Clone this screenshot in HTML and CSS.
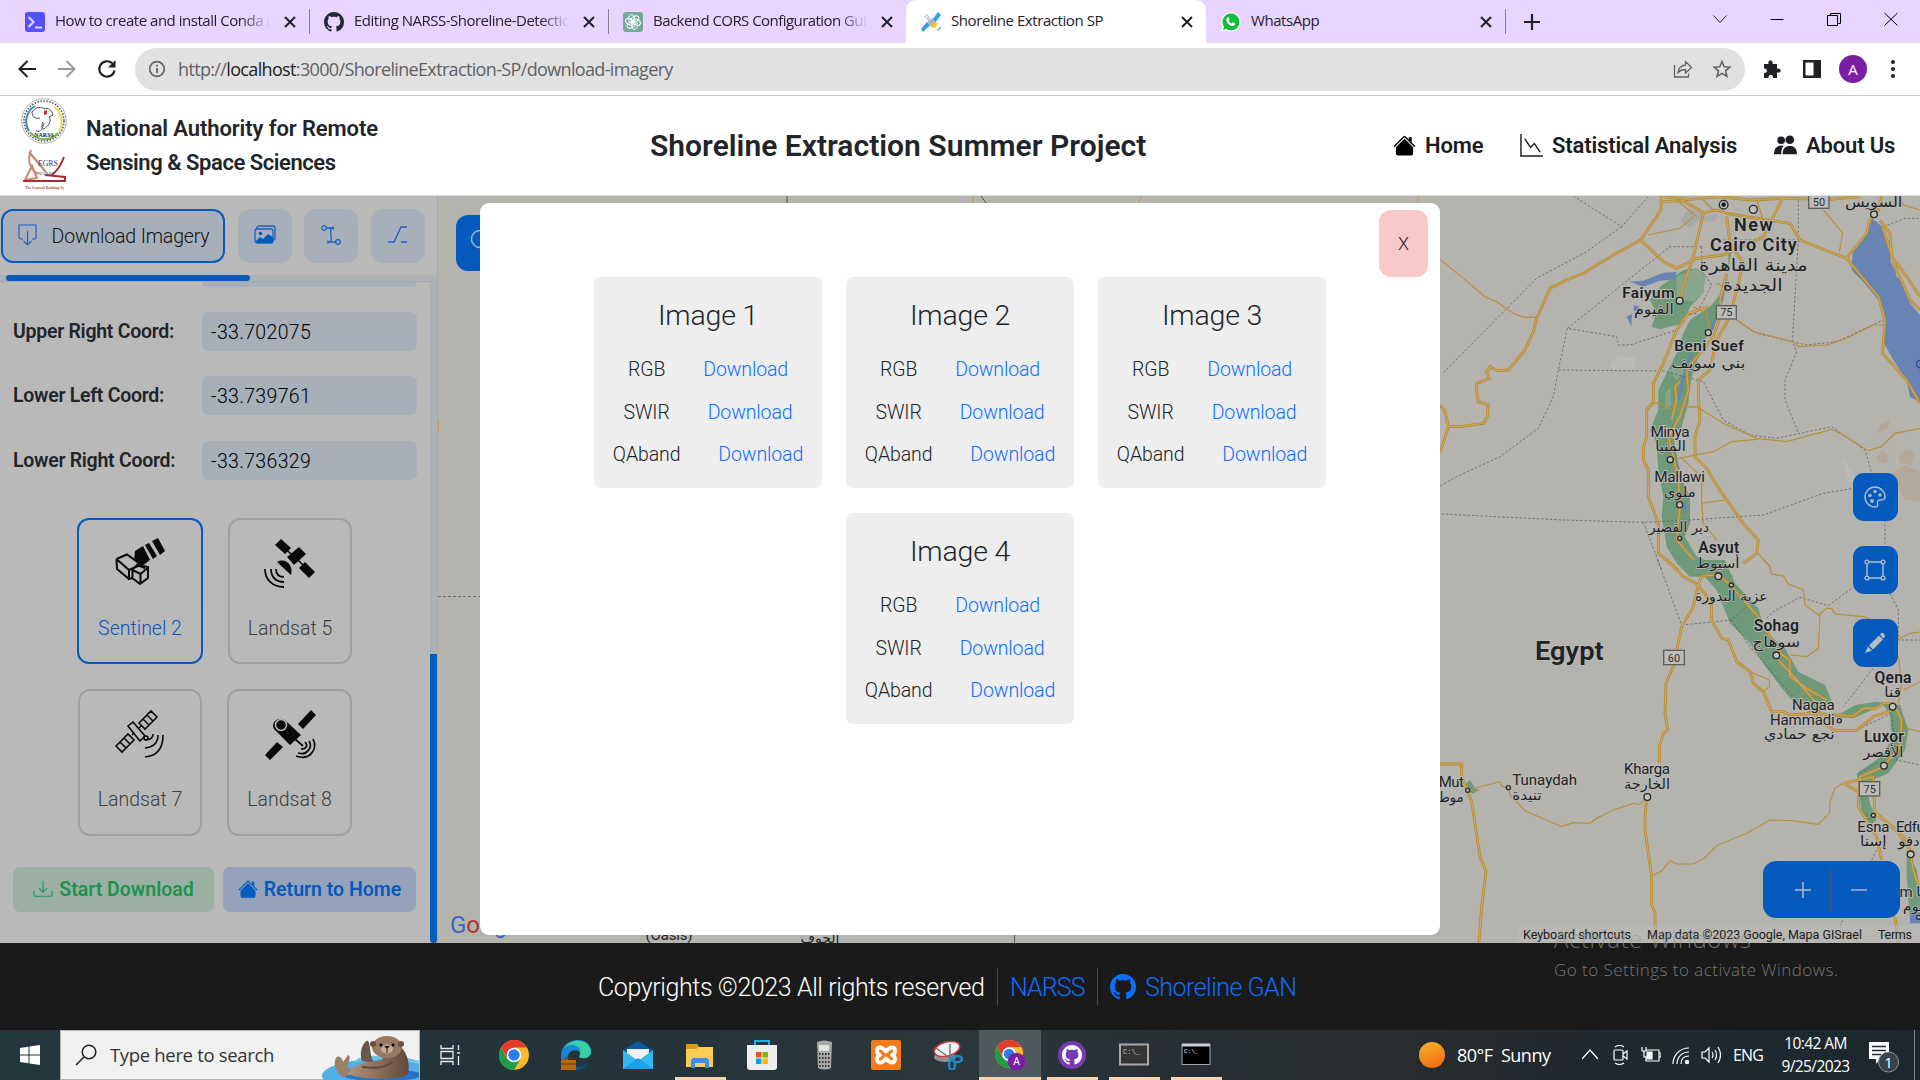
FILE: index.html
```html
<!DOCTYPE html>
<html lang="en">
<head>
<meta charset="utf-8">
<title>Shoreline Extraction SP</title>
<link rel="stylesheet" href="styles.css">
</head>
<body>
<svg class="defs" width="0" height="0">
  <defs>
    <symbol id="github" viewBox="0 0 16 16"><path d="M8 0C3.58 0 0 3.58 0 8c0 3.54 2.29 6.53 5.47 7.59.4.07.55-.17.55-.38 0-.19-.01-.82-.01-1.49-2.01.37-2.53-.49-2.69-.94-.09-.23-.48-.94-.82-1.13-.28-.15-.68-.52-.01-.53.63-.01 1.08.58 1.23.82.72 1.21 1.87.87 2.33.66.07-.52.28-.87.51-1.07-1.78-.2-3.64-.89-3.64-3.95 0-.87.31-1.59.82-2.15-.08-.2-.36-1.02.08-2.12 0 0 .67-.21 2.2.82.64-.18 1.32-.27 2-.27s1.36.09 2 .27c1.53-1.04 2.2-.82 2.2-.82.44 1.1.16 1.92.08 2.12.51.56.82 1.27.82 2.15 0 3.07-1.87 3.75-3.65 3.95.29.25.54.73.54 1.48 0 1.07-.01 1.93-.01 2.2 0 .21.15.46.55.38A8.01 8.01 0 0 0 16 8c0-4.42-3.58-8-8-8z"/></symbol>
    <symbol id="house" viewBox="0 0 16 16"><path d="m8 3.293 6 6V13.500a1.500 1.500 0 0 1-1.500 1.500h-9A1.500 1.500 0 0 1 2 13.500V9.293l6-6zm5-.793V6l-2-2V2.500a.5.5 0 0 1 .5-.5h1a.5.5 0 0 1 .5.5z"/><path d="M7.293 1.500a1 1 0 0 1 1.414 0l6.647 6.646a.5.5 0 0 1-.708.708L8 2.207 1.354 8.854a.5.5 0 1 1-.708-.708L7.293 1.500z"/></symbol>
    <symbol id="x" viewBox="0 0 12 12"><path d="M1 1l10 10M11 1L1 11" fill="none" stroke="#202124" stroke-width="2"/></symbol>
    <symbol id="chrome" viewBox="0 0 30 30"><circle cx="15" cy="15" r="15" fill="#f9bb2d"/><path d="M2 7.500A15 15 0 0 1 28 7.500H15L8.500 18z" fill="#e33b2e"/><path d="M2 7.500A15 15 0 0 0 15 30L21.500 19 8.500 19z" fill="#229a49"/><circle cx="15" cy="15" r="7.300" fill="#fff"/><circle cx="15" cy="15" r="5.700" fill="#2f7de9"/></symbol>
  </defs>
</svg>

<div class="tabstrip">
  <div class="tab">
    <svg class="fav" viewBox="0 0 20 20"><rect width="20" height="20" rx="3" fill="#5350ff"/><path d="M3.500 5l5 5-5 5M10 15.500h7" fill="none" stroke="#e6d5ff" stroke-width="2.200"/></svg>
    <span class="tab-title fade t1">How to create and install Conda r</span><svg class="tx"><use href="#x"/></svg>
  </div>
  <div class="tab">
    <svg class="fav" fill="#24292f"><use href="#github"/></svg>
    <span class="tab-title fade t2">Editing NARSS-Shoreline-Detectio</span><svg class="tx"><use href="#x"/></svg>
  </div>
  <div class="tab nosep">
    <svg class="fav" viewBox="0 0 20 20"><rect width="20" height="20" rx="3" fill="#74aa9c"/><g fill="none" stroke="#fff" stroke-width="1"><ellipse cx="8.500" cy="7" rx="2.800" ry="4.300" transform="rotate(0 10 10)"/><ellipse cx="8.500" cy="7" rx="2.800" ry="4.300" transform="rotate(60 10 10)"/><ellipse cx="8.500" cy="7" rx="2.800" ry="4.300" transform="rotate(120 10 10)"/><ellipse cx="8.500" cy="7" rx="2.800" ry="4.300" transform="rotate(180 10 10)"/><ellipse cx="8.500" cy="7" rx="2.800" ry="4.300" transform="rotate(240 10 10)"/><ellipse cx="8.500" cy="7" rx="2.800" ry="4.300" transform="rotate(300 10 10)"/></g></svg>
    <span class="tab-title fade t3">Backend CORS Configuration Guid</span><svg class="tx"><use href="#x"/></svg>
  </div>
  <div class="tab active">
    <svg class="fav" viewBox="0 0 20 20"><path d="M2 20l-2-3 6-7 3 3zM11 8l6-8 3 3-6 8z" fill="#3c9be8"/><path d="M6 10l5-4 4 4-5 5z" fill="#a9b7c4"/><path d="M3 4l5 4M5 2l4 5" stroke="#8aa" /><path d="M10 15c0-3 3-5 7-4l-3 5z" fill="#fdbf2d"/><path d="M16 18c2 0 3-1 3-3" stroke="#8dd68a" stroke-width="2" fill="none"/></svg>
    <span class="tab-title t4">Shoreline Extraction SP</span><svg class="tx"><use href="#x"/></svg>
  </div>
  <div class="tab">
    <svg class="fav" viewBox="0 0 20 20"><path d="M0 20l1.500-5A9.800 9.800 0 1 1 5 18.500z" fill="#f7fff9"/><circle cx="10" cy="10" r="8.500" fill="#12bc3c"/><path d="M2 18l1.500-4 2.500 2.500z" fill="#12bc3c"/><path d="M6 5.500c1-1 1.800-.6 2 .2l.6 1.600-1 1.300c.7 1.400 1.700 2.300 3 2.900l1.200-1.200 2.200 1c.6 1.700-1.200 2.900-2.600 2.700C8 13.500 5.300 10 5.300 7.500z" fill="#fff"/></svg>
    <span class="tab-title t5">WhatsApp</span><svg class="tx"><use href="#x"/></svg>
  </div>
  <svg class="plus" viewBox="0 0 16 16"><path d="M8 0v16M0 8h16" stroke="#202124" stroke-width="2.200"/></svg>
  <div class="winctl">
    <svg viewBox="0 0 16 16"><path d="M1.500 4.500L8 11.500l6.500-7" fill="none" stroke="#222"/></svg>
    <svg viewBox="0 0 16 16"><path d="M1.500 8.500h13" stroke="#000"/></svg>
    <svg viewBox="0 0 16 16"><path d="M1.500 4.500h10v10h-10zM4.500 4.500v-2h10v10h-3" fill="none" stroke="#000"/></svg>
    <svg viewBox="0 0 16 16"><path d="M1.500 2l13 12.500M14.500 2l-13 12.500" stroke="#000"/></svg>
  </div>
</div>

<div class="toolbar">
  <div class="navbtns">
    <svg viewBox="0 0 20 20"><path d="M19 10H3M10.500 2L2.500 10l8 8" fill="none" stroke="#202124" stroke-width="2"/></svg>
    <svg viewBox="0 0 20 20"><path d="M1 10h16M9.500 2l8 8-8 8" fill="none" stroke="#9a9a9c" stroke-width="2"/></svg>
    <svg viewBox="0 0 20 20"><path d="M17.500 11.500a7.700 7.700 0 1 1-2.300-7.200" fill="none" stroke="#202124" stroke-width="2.200"/><path d="M18.500 1v7.500H11z" fill="#202124"/></svg>
  </div>
  <div class="omnibox">
    <svg class="info" viewBox="0 0 18 18"><circle cx="9" cy="9" r="7.300" fill="none" stroke="#5f6368" stroke-width="1.700"/><path d="M9 8v5M9 4.800v1.700" stroke="#5f6368" stroke-width="1.800"/></svg>
    <span class="url">http://<b>localhost</b>:3000/ShorelineExtraction-SP/download-imagery</span>
    <svg class="oi" viewBox="0 0 20 20"><path d="M1.500 6v12h14v-3.500M5 13.500c.5-5 3-7 7.500-7.500V2.500l6 6-6 5.500v-3.500c-3.500 0-5.500 1-7.500 3z" fill="none" stroke="#5f6368" stroke-width="1.300"/></svg>
    <svg class="oi" viewBox="0 0 20 20"><path d="M10 2.500l2.200 5.200 5.600.5-4.200 3.700 1.300 5.500-4.900-3-4.900 3 1.300-5.500-4.200-3.700 5.600-.5z" fill="none" stroke="#5f6368" stroke-width="1.600"/></svg>
  </div>
  <div class="ext">
    <svg viewBox="0 0 20 20"><path d="M2 5h4.500c-1-5 5-5 4 0H15v4.500c5-1 5 5 0 4V19h-4c.5-4.500-5-4.500-4.500 0H2v-5c4 .5 4-5 0-4.500z" fill="#202124"/></svg>
    <svg viewBox="0 0 20 20"><path d="M1 1h18v18H1zM3.500 3.500v13h8v-13z" fill="#202124" fill-rule="evenodd"/></svg>
    <span class="avatar">A</span>
    <svg viewBox="0 0 20 20" fill="#202124"><circle cx="8" cy="3" r="2"/><circle cx="8" cy="10" r="2"/><circle cx="8" cy="17" r="2"/></svg>
  </div>
</div>

<header class="apphead">
  <svg class="logos" viewBox="0 0 46 92">
    <circle cx="23" cy="23" r="22.300" fill="#fff" stroke="#9a9a9a" stroke-width=".8"/><circle cx="23" cy="23" r="20" fill="none" stroke="#555" stroke-width="1.600" stroke-dasharray="1.500 1.500"/>
    <g fill="none" stroke-width="2"><path d="M8 33A18 18 0 0 1 14 8" stroke="#3c86b5"/><path d="M33 9a18 18 0 0 1 5 24" stroke="#e8dc4a"/><path d="M9 34a18 18 0 0 0 28 1" stroke="#7db54c"/></g>
    <path d="M11 14c4-6 10-5 12-3 4-2 8 1 9 6l-4 2c3 4 0 8-5 12-2 0-3-3-1-7M11 14c0 6 5 7 8 6M15 33c5 2 7-4 8-8" fill="none" stroke="#3f4c60" stroke-width="1"/><path d="M23 13l3-1v4l-3 1z" fill="#c33"/>
    <text x="23" y="39" font-family="Liberation Serif" font-size="6" font-weight="bold" text-anchor="middle" fill="#222">NARSS</text>
    <path d="M10 52c-3 8-3 18 7 24M8 54l17 20M4 82l7-14 5 12z" fill="none" stroke="#c98472" stroke-width="2"/><path d="M43 59c-3 8-7 14-12 18M2 83h42v-4l-20-2" fill="none" stroke="#b02a2c" stroke-width="2"/>
    <text x="17" y="68" font-family="Liberation Serif" font-size="8" fill="#343b6b" textLength="20">EGRS</text><text x="17" y="77" font-family="Liberation Serif" font-size="5" fill="#343b6b">NARSS</text>
    <text x="4" y="91" font-family="Liberation Serif" font-size="5" font-weight="bold" fill="#b04a4a" textLength="39" lengthAdjust="spacingAndGlyphs">The General Ranking Sy</text>
  </svg>
  <div class="org"><span class="org1">National Authority for Remote</span><br><span class="org2">Sensing &amp; Space Sciences</span></div>
  <h1 class="title">Shoreline Extraction Summer Project</h1>
  <nav class="nav">
    <a class="n1"><svg><use href="#house"/></svg><span>Home</span></a>
    <a class="n2"><svg viewBox="0 0 24 24"><path d="M1 0v23h23M5 5l6 9 4-4 6 9" fill="none" stroke="#1b1d20" stroke-width="1.500"/></svg><span>Statistical Analysis</span></a>
    <a class="n3"><svg viewBox="0 0 24 24" fill="#1b1d20"><circle cx="7.500" cy="6.500" r="4"/><circle cx="16.500" cy="6" r="4.500"/><path d="M0 21c0-6 3-9 8-9l2 .5c-2 2-2.500 5-2.500 8.500zM9 21c0-6 3-8.500 7.500-8.500S24 15 24 21z"/></svg><span>About Us</span></a>
  </nav>
</header>

<main class="workspace">
  <aside class="side">
    <div class="tools">
      <div class="tool on"><svg viewBox="0 0 22 22"><path d="M6 15H4a2 2 0 0 1-2-2V1h17v12a2 2 0 0 1-2 2h-2M10.500 7v13.500M6.500 17l4 4 4-4" fill="none" stroke="#2260c4" stroke-width="1.200"/></svg><span>Download Imagery</span></div>
      <div class="tool a"><svg viewBox="0 0 22 22"><path d="M3 5V3.500A2 2 0 0 1 5 2h14a2 2 0 0 1 2 2v10a2 2 0 0 1-2 2" fill="none" stroke="#1a60c2" stroke-width="1.300"/><rect x="1" y="5" width="18" height="14" rx="2" fill="none" stroke="#1a60c2" stroke-width="1.300"/><circle cx="6.500" cy="9.500" r="1.800" fill="#065abd"/><path d="M2 17l4-4 3 2 5-5 5 3v6H2z" fill="#065abd"/></svg></div>
      <div class="tool b"><svg viewBox="0 0 22 22" fill="none" stroke="#1a60c2" stroke-width="1.300"><circle cx="4" cy="4" r="2.300"/><circle cx="18" cy="18" r="2.300"/><path d="M6.500 4H14M11 4c-1 5 1 9 0 14M8 18h7.500M13 2.500v3M8 16.500v3"/></svg></div>
      <div class="tool c"><svg viewBox="0 0 22 22" fill="none" stroke="#1a60c2" stroke-width="1.300"><path d="M1 18h6l7-15h6M14 18h6"/></svg></div>
    </div>
    <div class="hscroll"><div class="hthumb"></div></div>
    <div class="sidebody">
      <div class="form">
        <div class="cut"></div>
        <div class="field"><label class="l1">Upper Right Coord:</label><span class="inp">-33.702075</span></div>
        <div class="field"><label class="l2">Lower Left Coord:</label><span class="inp">-33.739761</span></div>
        <div class="field"><label class="l1">Lower Right Coord:</label><span class="inp">-33.736329</span></div>
        <div class="sats">
          <div class="sat on"><svg viewBox="0 0 50 50"><path d="M1.500 21L12 16.500 28 28l5 1v11l-8 6-9-7M1.500 21L2 31l12 10M1.500 21L14 32l9-4M14 32v9l4-1M17.500 32v7M17.500 32l8 4 7-6M25.500 36v9M18 31l4-4 8 3" fill="none" stroke="#0a0a0a" stroke-width="2"/><path d="M20 13l8-5 7 14-9 7-7-7zM30 7l4-2 8 13-4 3zM37 3l6-3 7 13-5 4z" fill="#0a0a0a"/></svg><span>Sentinel 2</span></div>
          <div class="sat five"><svg viewBox="0 0 50 50"><path d="M10 7l6-6 10 9-6 6zM22 19L34 9l7 7-12 11zM34 30l6-6 10 10-6 6zM12 24c8-5 17 3 14 13z" fill="#0a0a0a"/><path d="M22 12l5 5M33 22l6 6" stroke="#0a0a0a" stroke-width="1.500"/><path d="M11 31c0 5 3 8 8 8M6 31c0 8 5 13 13 13M0 31c0 11 8 18 19 18" fill="none" stroke="#0a0a0a" stroke-width="1.800"/></svg><span>Landsat 5</span></div>
          <div class="sat narrow"><svg viewBox="0 0 50 50"><g fill="none" stroke="#0a0a0a" stroke-width="1.600"><path d="M24 14L36 2l6 6-12 12zM28 10l6 6M32 6l6 6M1 37l12-12 6 6L7 43zM5 33l6 6M9 29l6 6M13 17l5-4 12 14-5 5zM17 26l2-2M27 16l-3 3M30 31c5 0 8-2 8-6M30 39c9-1 13-6 13-13M30 48c12-1 18-8 18-22"/><circle cx="31" cy="29" r="2"/></g></svg><span>Landsat 7</span></div>
          <div class="sat"><svg viewBox="0 0 50 50"><path d="M33 15L46 1l5 5-13 14zM0 46l12-13 6 5L5 51z" fill="#0a0a0a"/><path d="M9 20c-4-7 6-15 13-7l14 13-11 10z" fill="#0a0a0a"/><circle cx="16" cy="16" r="5.500" fill="#0a0a0a" stroke="#b9b9b9" stroke-width="1.500"/><path d="M36 40c6 0 7-4 4-7M33 44c9 3 15-6 11-12M31 47c14 5 22-7 17-17M30 30l8 7" fill="none" stroke="#0a0a0a" stroke-width="1.700"/></svg><span>Landsat 8</span></div>
        </div>
        <div class="actions">
          <div class="btn green"><svg viewBox="0 0 22 22"><path d="M1 13v4a2 2 0 0 0 2 2h16a2 2 0 0 0 2-2v-4M11 2v12M6.500 10l4.500 4.500 4.500-4.500" fill="none" stroke="#1d9b57" stroke-width="1.300"/></svg><span>Start Download</span></div>
          <div class="btn blue"><svg><use href="#house"/></svg><span>Return to Home</span></div>
        </div>
      </div>
      <div class="vscroll"><div class="vthumb"></div></div>
    </div>
  </aside>

  <section class="mapwrap">
    <svg class="map" viewBox="438 196 1482 747">
      <defs>
        <g id="mainA" fill="none">
          <path d="M693 18V60L632 150L700 215L740 235L800 205L880 195L1000 140L1060 20M632 150L550 195L460 250L410 270L360 295L345 330L320 385L310 425L285 480L235 540L200 542L180 530L170 545L178 565L140 580V605L145 635L175 645L172 680L160 700L90 710L55 710L30 790M55 710L45 665L30 645"/>
          <path d="M693 35L760 32L820 68L860 60L900 72L1010 90L1080 100L1110 150L1185 180L1250 205L1310 130L1320 90L1345 60L1355 20M700 20L780 28L870 20L960 30L1060 25L1200 28L1290 20M1250 205L1345 320L1365 390L1358 490L1430 570L1470 640M1357 110L1400 240L1440 330L1470 360M1350 90L1380 130L1385 200L1430 260L1470 320"/>
          <path d="M820 70L790 200L760 290L750 330M835 350L775 370L740 420L700 520L670 580V635L650 660V740L640 770V810L655 840V920L685 1000V1090L745 1140"/>
          <path d="M890 80L900 160L940 220L900 380L860 450L840 540L805 570V620L810 690L795 740V800L830 835L850 870L890 930L940 1000L985 1050L980 1090L940 1120M890 250L870 330L875 370L850 440L770 540L775 600L750 680L715 740L745 860L750 950L740 1050L800 1120M750 575L735 590L740 630L725 690"/>
        </g>
        <g id="thinA" fill="none"><path d="M30 208L100 265L165 320L200 335L250 370L280 382H320M1180 60L1210 95L1238 130L1228 185M920 390L970 425L1090 455L1105 470L1190 465L1250 445L1330 405H1365M670 640L690 640L720 655L800 650L880 700L980 745L1070 755L1205 718L1240 735L1315 782L1355 770L1395 730L1470 715M745 805L850 785L905 755L980 748M750 800L815 860V940L885 930M815 940L820 1000L860 1050M655 135L750 115L790 80M980 30L1000 90M820 30L850 60M740 30L800 80M1410 20L1420 45L1470 60M790 350L830 370L840 430M860 280L900 300M985 1090L1020 1130"/></g>
        <g id="mainB" fill="none">
          <path d="M710 0L760 50L805 75L790 140L755 200L730 320L708 370L705 460L713 510L700 520L688 560V610M650 715L645 770V810L665 950V1035L675 1060V1148M30 612H95V650L125 725L150 890L168 935L155 1040L147 1148M805 75L815 48L865 45L900 75L985 170L1050 280L1080 300V350L1130 385L1190 420M805 75L845 130V180L875 235L895 240L920 305L960 335L970 370L1000 395L1025 455H1060L1080 465L1140 460L1220 465L1270 468L1300 445L1340 445L1360 430L1390 430L1415 480L1410 560L1360 620L1290 650L1285 740L1340 830L1355 900"/>
          <path d="M1150 470L1215 512H1280L1330 470L1390 450M1240 670L1330 650L1335 760L1400 810L1440 870L1450 930L1470 990M1240 670L1285 695M1395 1070L1405 1148M1340 760L1430 840M1045 300L1100 360L1160 430"/>
        </g>
        <g id="thinB" fill="none"><path d="M113 690L210 665L215 678L235 685L240 705L285 752L395 800L430 788L480 790L500 775L550 750L610 730L630 733L650 712M665 948L695 933L720 902L740 912H790L825 893L860 857L950 820L1020 780L1085 782L1165 793L1198 760L1200 725L1215 685L1240 670M1000 0L1020 20L1025 42L1060 48L1075 72L1120 90L1125 135L1165 165L1190 145L1205 145L1215 162L1300 170L1350 190M1170 165L1165 265L1130 290L1080 285M960 335L1018 360V380L1000 395M1400 240L1440 220L1470 216M1420 390L1470 365M1405 290L1415 370L1405 430M1430 505L1470 515"/></g>
      </defs>
      <rect x="438" y="196" width="1482" height="747" fill="#b5b3ae"/>
      <g transform="translate(1430 190) scale(.33333)">
        <path d="M750 90l30-35 45 25 40-10-10 25-50-5-30 25z" fill="#a5a9aa"/>
        <path d="M540 520l30-22 45 5v30l-35 12-40-10zM1238 800l35 50v25l-20 5z" fill="#bab9b5"/>
        <path d="M1340 725l15-25 25-10-5 20-30 20zM1340 800l18-20 17 15-5 25-25-5zM1405 800l20-20 30 5-10 40-35-5zM1385 850l40-25 45 20v90l-45-5-20-40z" fill="#b3a89a"/>
        <path d="M895 130l10 50-10 60-15 90-20 60-30 50-15 40-25 60-10 50-5 50-20 70-25 30 15 80 10 50 25 50v80l-15 40 35 60 80 30 30 30H780l-40-40-30-50-15-90 5-60-15-80-5-80-20-40 25-60v-60l25-50 30-60 20-60 20-40 60-40 50-60 5-60z" fill="#6f9a79"/>
        <path d="M690 290l70-50 40-5 25 20-5 55-40 40-20 50-70 18-25-8 15-40-20-40z" fill="#6f9a79"/>
        <path d="M740 260l60-25 25 20-5 55-30 25-50-10zM715 540l30-15 20 20-25 25zM705 610l15-15 5 50-20 15z" fill="#87a68c"/>
        <path d="M600 275l40-3 60-24 40-2-5 22-45 4-50 18zM612 345l15 5-5 15-12-5zM590 380l16-8-2 38zM1325 85l32 25 5 25 18 35 2 45 13 25 5 20 20 15 20 65 30 35v260l-30-13-10-52-40-60-28-50 3-70-20-60-45-55-35-35 3-55 22-35 20-20z" fill="#6784b4"/>
        <path d="M785 490l-25 75-15 65M735 815l10 20M765 940v30M855 390l-10 30" fill="none" stroke="#6784b4" stroke-width="9"/>
        <g stroke="#555862" stroke-width="2.200" stroke-dasharray="7 6" fill="none"><path d="M430 18L575 110L655 20M575 110L470 185L320 265L38 550M880 150H1105V20M1105 150L1087 455L1100 485L1065 570V630L1103 725M815 170H720L412 415L560 440L565 465L600 465L740 420L770 375L800 370L845 285L815 240V170M412 415L385 540L370 620L325 715L210 800L80 860L30 888M385 540L700 543L820 575L880 690L960 735L1040 745L1205 710L1305 780L1325 850M920 390L980 430L1130 465L1220 455L1360 390M35 972L400 990L640 997L780 990L1000 975L1180 910L1270 895M640 997L695 1140M1365 990V1060M1360 110L1425 85H1470"/></g>
        <g stroke="#b98a28"><use href="#mainA" stroke-width="8.500"/></g><g stroke="#c7a86d"><use href="#mainA" stroke-width="3.500"/></g><g stroke="#b98f3b"><use href="#thinA" stroke-width="3.500"/></g>
        <g fill="#c2c1bd" stroke="#282a2d" stroke-width="4"><circle cx="970" cy="58" r="12"/><circle cx="1332" cy="73" r="10"/><circle cx="749" cy="332" r="10"/><circle cx="835" cy="428" r="9"/><circle cx="721" cy="809" r="9"/><circle cx="749" cy="944" r="9"/><circle cx="749" cy="1045" r="6"/><circle cx="881" cy="44" r="13"/><circle cx="881" cy="44" r="5" fill="#111"/></g>
        <g class="shield"><rect x="1136" y="15" width="61" height="40"/><text x="1167" y="47">50</text><rect x="859" y="347" width="60" height="40"/><text x="889" y="379">75</text></g>
        <g class="lb"><text x="970" y="123" font-size="54" textLength="116">New</text><text x="970" y="183" font-size="54" textLength="260">Cairo City</text><text x="655" y="323" font-size="46" textLength="157">Faiyum</text><text x="837" y="483" font-size="46" textLength="208">Beni Suef</text><text x="866" y="1089" font-size="47" textLength="123">Asyut</text></g>
        <g class="ln"><text x="720" y="742" font-size="46" textLength="117">Minya</text><text x="749" y="877" font-size="46" textLength="152">Mallawi</text></g>
        <g class="ar"><text x="1331" y="50" font-size="44" textLength="172" lengthAdjust="spacingAndGlyphs">السويس</text><text x="970" y="243" font-size="50" textLength="326" lengthAdjust="spacingAndGlyphs">مدينة القاهرة</text><text x="968" y="303" font-size="50" textLength="180" lengthAdjust="spacingAndGlyphs">الجديدة</text><text x="672" y="372" font-size="44" textLength="120" lengthAdjust="spacingAndGlyphs">الفيوم</text><text x="835" y="533" font-size="42" textLength="222" lengthAdjust="spacingAndGlyphs">بني سويف</text><text x="722" y="784" font-size="42" textLength="92" lengthAdjust="spacingAndGlyphs">المنيا</text><text x="749" y="920" font-size="42" textLength="96" lengthAdjust="spacingAndGlyphs">ملوي</text><text x="747" y="1027" font-size="42" textLength="180" lengthAdjust="spacingAndGlyphs">دير القصير</text></g>
        <text class="sea" transform="translate(1452 515) rotate(60)" font-size="40">Gu</text>
      </g>
      <g transform="translate(1430 560) scale(.33333)">
        <path d="M755 0h130l30 70 70 75 20 70 60 50 40 70 80 40 25 60-60 30-70-50-70-90-50-75-60-60-40-100-45-50-40-30zM1225 465l50-30 60-10 75 10 25 75-10 60-50 70-70 30 15 60 20 50-25 15-20-30-5-55-10-70 80-55 25-50-5-70-20-30-90 40-55-5zM105 675l15-15 15 25 15 5-20 10-20-3zM1430 870l30 60 10 60v80l-30 10-10-130z" fill="#6f9a79"/>
        <path d="M1440 1060h30v30h-30z" fill="#6784b4"/>
        <g stroke="#555862" stroke-width="2.200" stroke-dasharray="7 6" fill="none"><path d="M683 0L755 195L905 180L950 140M905 180L960 260L1090 410M1010 175L1030 155L1110 112L1195 137L1270 82M1380 100L1405 150V240H1470M1330 325L1240 440M1220 515L1280 510L1385 460L1400 600L1470 615M1325 900L1340 870M1230 1100L1240 1075M1290 640L1340 610M1290 745L1330 790"/></g>
        <g stroke="#b98a28"><use href="#mainB" stroke-width="8.500"/></g><g stroke="#c7a86d"><use href="#mainB" stroke-width="3.500"/></g><g stroke="#b98f3b"><use href="#thinB" stroke-width="3.500"/></g>
        <g fill="#c2c1bd" stroke="#282a2d" stroke-width="4"><circle cx="865" cy="49" r="10"/><circle cx="904" cy="75" r="6"/><circle cx="1039" cy="286" r="10"/><circle cx="1228" cy="482" r="6"/><circle cx="1388" cy="440" r="10"/><circle cx="1362" cy="617" r="10"/><circle cx="1330" cy="766" r="6"/><circle cx="1442" cy="883" r="10"/><circle cx="652" cy="711" r="10"/><circle cx="235" cy="683" r="6"/><circle cx="113" cy="691" r="6"/><circle cx="1466" cy="1072" r="6"/></g>
        <g class="shield"><rect x="701" y="271" width="62" height="43"/><text x="732" y="305">60</text><rect x="1288" y="665" width="61" height="43"/><text x="1319" y="699">75</text></g>
        <g class="lb"><text x="418" y="299" font-size="80" textLength="206" lengthAdjust="spacingAndGlyphs">Egypt</text><text x="1039" y="214" font-size="47" textLength="136">Sohag</text><text x="1389" y="368" font-size="47" textLength="111">Qena</text><text x="1362" y="545" font-size="47" textLength="120">Luxor</text></g>
        <g class="ln"><text x="1150" y="451" font-size="45" textLength="128">Nagaa</text><text x="1117" y="496" font-size="45" textLength="194">Hammadi</text><text x="651" y="643" font-size="45" textLength="138">Kharga</text><text x="344" y="675" font-size="45" textLength="194">Tunaydah</text><text x="64" y="682" font-size="45" textLength="76">Mut</text><text x="1330" y="815" font-size="45" textLength="96">Esna</text><text x="1441" y="815" font-size="45" textLength="86">Edfu</text><text x="1422" y="1010" font-size="45">Kom U</text></g>
        <g class="ar"><text x="863" y="24" font-size="42" textLength="132" lengthAdjust="spacingAndGlyphs">أسيوط</text><text x="904" y="122" font-size="42" textLength="218" lengthAdjust="spacingAndGlyphs">عزبة البدورة</text><text x="1039" y="260" font-size="44" textLength="144" lengthAdjust="spacingAndGlyphs">سوهاج</text><text x="1388" y="411" font-size="44" textLength="50" lengthAdjust="spacingAndGlyphs">قنا</text><text x="1108" y="538" font-size="42" textLength="212" lengthAdjust="spacingAndGlyphs">نجع حمادي</text><text x="1360" y="590" font-size="44" textLength="120" lengthAdjust="spacingAndGlyphs">الأقصر</text><text x="651" y="686" font-size="42" textLength="138" lengthAdjust="spacingAndGlyphs">الخارجة</text><text x="291" y="719" font-size="42" textLength="88" lengthAdjust="spacingAndGlyphs">تنيدة</text><text x="62" y="726" font-size="42" textLength="78" lengthAdjust="spacingAndGlyphs">موط</text><text x="1330" y="857" font-size="42" textLength="80" lengthAdjust="spacingAndGlyphs">إسنا</text><text x="1443" y="857" font-size="42" textLength="76" lengthAdjust="spacingAndGlyphs">إدفو</text><text x="1412" y="1052" font-size="42">كوم امبو</text></g>
      </g>
      <path d="M438 596.500h42" stroke="#6f6f6f" stroke-dasharray="3 2"/>
      <path d="M438.500 420v12M973 196v7M1142 196l-4 7M1418 196v7" stroke="#c39a45"/>
      <path d="M787 196v7M981 196l5 7M1014.500 935v8" stroke="#555"/>
      <g class="ln"><text x="669" y="940" font-size="15" textLength="47">(Oasis)</text></g><g class="ar"><text x="820" y="943" font-size="14">الجوف</text></g>
      <g class="goog"><text x="450" y="933"><tspan fill="#3a68bb">G</tspan><tspan fill="#a83a30">o</tspan><tspan fill="#c09020">o</tspan><tspan fill="#3a68bb">g</tspan></text></g>
      <rect x="1517" y="925" width="403" height="18" fill="#bab9b5" opacity=".6"/>
      <g class="attr"><text x="1523" y="939" textLength="108">Keyboard shortcuts</text><text x="1647" y="939" textLength="215">Map data ©2023 Google, Mapa GISrael</text><text x="1878" y="939" textLength="34">Terms</text></g>
    </svg>
    <div class="searchbtn"><svg viewBox="0 0 20 20"><circle cx="9" cy="9" r="8.500" fill="none" stroke="#a9b6c6" stroke-width="1.300"/></svg></div>
    <div class="mapbtns">
      <div class="mb"><svg viewBox="0 0 22 22"><path d="M11 1a10 10 0 1 0 0 20c2 0 3-1 2.500-3-.5-3 .5-4 3-4 3 0 4.500-1 4.500-3A10 10 0 0 0 11 1z" fill="none" stroke="#b4bcc6" stroke-width="1.400"/><g fill="#b4bcc6"><circle cx="11" cy="5.500" r="1.700"/><circle cx="6" cy="9.500" r="1.700"/><circle cx="16" cy="9" r="1.700"/><circle cx="8" cy="15" r="1.900"/></g></svg></div>
      <div class="mb"><svg viewBox="0 0 22 22" fill="none" stroke="#b4bcc6" stroke-width="1.400"><path d="M5 3h12M5 19h12M3 5v12M19 5v12"/><circle cx="3" cy="3" r="1.900"/><circle cx="19" cy="3" r="1.900"/><circle cx="3" cy="19" r="1.900"/><circle cx="19" cy="19" r="1.900"/></svg></div>
      <div class="mb"><svg viewBox="0 0 22 22" fill="#b4bcc6"><path d="M16 2.500l1.500-1.500c1-1 4 2 3.500 3.500l-2 2zM15 3.500l4 4L9 17.500l-4-4zM4 14.500l4 4-7 2.500z"/></svg></div>
    </div>
    <div class="zoom"><svg viewBox="0 0 16 16"><path d="M8 0v16M0 8h16" stroke="#b9bfc8" stroke-width="1.400"/></svg><i></i><svg viewBox="0 0 16 16"><path d="M0 8h16" stroke="#b9bfc8" stroke-width="1.400"/></svg></div>
  </section>

  <div class="overlay">
    <div class="modal">
      <div class="modalhead"><div class="close">X</div></div>
      <div class="cards">
        <div class="card"><h2>Image 1</h2><p><span>RGB</span><a>Download</a></p><p><span>SWIR</span><a>Download</a></p><p><span>QAband</span><a>Download</a></p></div>
        <div class="card"><h2>Image 2</h2><p><span>RGB</span><a>Download</a></p><p><span>SWIR</span><a>Download</a></p><p><span>QAband</span><a>Download</a></p></div>
        <div class="card"><h2>Image 3</h2><p><span>RGB</span><a>Download</a></p><p><span>SWIR</span><a>Download</a></p><p><span>QAband</span><a>Download</a></p></div>
        <div class="card"><h2>Image 4</h2><p><span>RGB</span><a>Download</a></p><p><span>SWIR</span><a>Download</a></p><p><span>QAband</span><a>Download</a></p></div>
      </div>
    </div>
  </div>
</main>

<footer class="foot">
  <span class="copy">Copyrights ©2023 All rights reserved</span><i></i><a class="f1">NARSS</a><i></i><svg class="ghf" fill="#0d6efd"><use href="#github"/></svg><a class="f2">Shoreline GAN</a>
  <svg class="watermark" viewBox="1544 923 310 60"><text class="wm" x="1554" y="948" textLength="197">Activate Windows</text><text class="wm2" x="1554" y="976" textLength="284">Go to Settings to activate Windows.</text></svg>
</footer>

<div class="taskbar">
  <div class="start"><svg viewBox="0 0 20 20" fill="#fff"><path d="M0 3l8.500-1.300V9.500H0zM9.500 1.500L20 0v9.500H9.500zM0 10.500h8.500v7.800L0 17zM9.500 10.500H20V20L9.500 18.400z"/></svg></div>
  <div class="search">
    <svg class="mag" viewBox="0 0 22 22"><circle cx="14" cy="8" r="6.800" fill="none" stroke="#222" stroke-width="1.500"/><path d="M9 13L1 21" stroke="#222" stroke-width="1.600"/></svg>
    <span>Type here to search</span>
    <svg class="otter" viewBox="0 0 97 49"><defs><linearGradient id="of" x1="0" x2="1"><stop offset="0" stop-color="#b1937a"/><stop offset="1" stop-color="#62493a"/></linearGradient></defs><ellipse cx="58" cy="45" rx="58" ry="17" fill="#54aee6"/><path d="M30 32q35-8 67 0v-2q-30-9-60-3z" fill="#63c5e0"/><ellipse cx="60" cy="44" rx="40" ry="6" fill="#2872c8"/><path d="M40 30C36 18 44 8 46 10c3 4 1 13 6 22z" fill="#6d574c"/><path d="M14 27c3-4 7 1 7 4l5-7c4 1 0 8-1 11l8 8-12 3c-8-6-10-13-7-19z" fill="#9b8069"/><path d="M26 43c5-12 24-12 34-14l3-10 17-2c8 10 7 20 6 26-5 7-48 6-60 0z" fill="url(#of)"/><ellipse cx="65" cy="16" rx="15" ry="11" fill="#967a63"/><circle cx="51" cy="13" r="3" fill="#6b5144"/><circle cx="79" cy="13" r="3" fill="#6b5144"/><ellipse cx="65" cy="18" rx="6" ry="4.500" fill="#c6ac93"/><path d="M62 15h6l-3 3z" fill="#161111"/><circle cx="59" cy="14" r="1.500"/><circle cx="71" cy="14" r="1.500"/><path d="M65 18v4" stroke="#222"/><path d="M40 36c14 2 24 0 30-5" fill="none" stroke="#604a3d" stroke-width="2"/></svg>
  </div>
  <div class="apps">
    <div class="app tv"><svg viewBox="0 0 20 20" fill="none" stroke="#e8ecee" stroke-width="1.300"><path d="M1 0v3.500h12V0M1 20v-3.500h12V20M1 6.500h12v7H1zM18.500 0v5M18.500 11v9M17 8h3"/></svg></div>
    <div class="app"><svg><use href="#chrome"/></svg></div>
    <div class="app"><svg viewBox="0 0 30 30"><path d="M0 15C1-4 30-5 30 12c0 5-6 8-12 5 3-5-2-8-7-6-5 2-8 10 4 19C5 30 0 24 0 15z" fill="#1687d4"/><path d="M3 8c7-11 27-9 27 4 0 5-6 8-12 5C24 5 9 2 3 8z" fill="#37cfa5"/><path d="M8 17c0 10 12 13 19 6-3 7-13 9-19 5z" fill="#075397"/><rect y="20" width="15" height="10" fill="#b5690e"/><path d="M0 24h15M4 20v-2h7v2" stroke="#643603" fill="none"/></svg></div>
    <div class="app"><svg viewBox="0 0 30 30"><path d="M0 10L15 1l15 9v18H0z" fill="#0b59a2"/><path d="M4 9h22v10H4z" fill="#f0f0f0"/><path d="M0 10l15 11 15-11v19H0z" fill="#35b8f1"/><path d="M0 29l15-11 15 11z" fill="#1e9fe6"/></svg></div>
    <div class="app run"><svg viewBox="0 0 30 30"><path d="M1 4h11l2 3h14v20H1z" fill="#fccd54"/><path d="M1 4h11l2 3-3 2H1z" fill="#dc9c0c"/><path d="M6 28v-8l2-2h14l2 2v8h-4v-5H10v5z" fill="#3a94dc"/></svg></div>
    <div class="app"><svg viewBox="0 0 30 30"><path d="M8 6V1h14v5" fill="none" stroke="#22acec" stroke-width="2"/><path d="M0 5h30v22a3 3 0 0 1-3 3H3a3 3 0 0 1-3-3z" fill="#eee"/><path fill="#f25022" d="M9 12h5.500v5.500H9z"/><path fill="#7fba00" d="M15.500 12H21v5.500h-5.500z"/><path fill="#00a4ef" d="M9 18.500h5.500V24H9z"/><path fill="#ffb900" d="M15.500 18.500H21V24h-5.500z"/></svg></div>
    <div class="app"><svg viewBox="0 0 30 30"><path d="M8 2q7-3 15 0l-1 26q-6 3-13 0z" fill="#a9a9a9"/><path d="M10 5h10v6H10z" fill="#dfe5df"/><path d="M10 14h11M10 18h11M10 22h11M10 26h11" stroke="#333" stroke-width="2" stroke-dasharray="1.500 1.500"/></svg></div>
    <div class="app"><svg viewBox="0 0 30 30"><rect width="30" height="30" rx="2" fill="#f47a1e"/><path d="M15 11.500C13 9 11 7.500 9 7.500c-4 0-4 6 0 7.500-4 1.500-4 7.500 0 7.500 2 0 4-1.500 6-4 2 2.500 4 4 6 4 4 0 4-6 0-7.500 4-1.500 4-7.500 0-7.500-2 0-4 1.500-6 4z" fill="none" stroke="#fff" stroke-width="3.800" stroke-linejoin="round"/></svg></div>
    <div class="app"><svg viewBox="0 0 30 30"><ellipse cx="12" cy="17" rx="11" ry="5" fill="#929292"/><ellipse cx="14" cy="9" rx="13" ry="7" fill="#f4f4f4" stroke="#cf3a3f" stroke-width="1.500" transform="rotate(-15 14 9)"/><path d="M3 8l18 13M17 4v17" stroke="#777" stroke-width="1.500"/><g fill="none" stroke="#1d88ce" stroke-width="2.500"><ellipse cx="24" cy="19" rx="5" ry="3"/><ellipse cx="19" cy="25" rx="3" ry="5"/></g></svg></div>
    <div class="app cur"><svg viewBox="0 0 32 32"><use href="#chrome" width="30" height="30"/><circle cx="23" cy="23" r="9.500" fill="#7b1fa2"/><text x="23" y="27" font-family="Roboto" font-size="11" fill="#fff" text-anchor="middle">A</text></svg></div>
    <div class="app run"><svg viewBox="0 0 30 30"><circle cx="15" cy="15" r="14" fill="#783bb1"/><use href="#github" x="5" y="5" width="20" height="20" fill="#fff"/></svg></div>
    <div class="app run"><svg viewBox="0 0 30 30"><rect x="1" y="4.500" width="28" height="20" fill="#353535" stroke="#a7a7a7" stroke-width="2"/><text x="4" y="14" font-size="7" font-family="Liberation Mono" fill="#ccc">C:\_</text></svg></div>
    <div class="app run"><svg viewBox="0 0 30 30"><rect x="1" y="4.500" width="28" height="20" fill="#000" stroke="#a7a7a7"/><path d="M1 5h28" stroke="#c5d0d9" stroke-width="3"/><text x="3" y="13" font-size="6" font-family="Liberation Mono" fill="#fff">C:\_</text></svg></div>
  </div>
  <div class="tray">
    <i class="sun"></i><span class="wx">80°F&nbsp; Sunny</span>
    <svg class="chev" viewBox="0 0 16 16"><path d="M0 12l8-9 8 9" fill="none" stroke="#fff" stroke-width="1.300"/></svg>
    <svg class="ti" viewBox="0 0 20 20" fill="none" stroke="#fff" stroke-width="1.200"><rect x="3" y="5" width="9" height="10" rx="1"/><path d="M12 9l4-3v8l-4-3M4 2c3-2 6-2 9 0M4 18c3 2 6 2 9 0"/></svg>
    <svg class="ti" viewBox="0 0 20 20" fill="none" stroke="#fff" stroke-width="1.200"><path d="M5 5h13v11H5v-5M18 8h2v4h-2M1 2v4h4V2M3 6v6h2"/><path d="M6 7h5v7H6z" fill="#fff"/></svg>
    <svg class="ti w" viewBox="0 0 20 20" fill="none" stroke="#fff" stroke-width="1.200"><path d="M2 19C2 10 9 3 18 3M6 19c0-7 5-12 12-12M10 19c0-5 3-8 8-8"/><circle cx="16" cy="17" r="1.600" fill="#fff"/></svg>
    <svg class="ti" viewBox="0 0 20 20" fill="none" stroke="#fff" stroke-width="1.200"><path d="M1 7h3l4-4v14l-4-4H1zM11 7q2 3 0 6M14 5q3 5 0 10M17 2q5 8 0 16"/></svg>
    <span class="lang">ENG</span>
    <div class="clock"><span class="tm">10:42 AM</span><span class="dt">9/25/2023</span></div>
    <svg class="note" viewBox="0 0 32 34"><path d="M0 0h20v17h-9l-4 5v-5H0z" fill="#fff"/><path d="M3 4.500h14M3 8.500h14M3 12.500h9" stroke="#1c2a30" stroke-width="1.300"/><circle cx="19.500" cy="20" r="10" fill="#39434a" stroke="#8b9296"/><text x="19.500" y="25.500" font-family="Open Sans" font-size="15" fill="#fff" text-anchor="middle">1</text></svg>
    <i class="edge"></i>
  </div>
</div>
</body>
</html>
```
FILE: styles.css
```css
*{box-sizing:border-box}
body{margin:0;width:1920px;height:1080px;overflow:hidden;background:#fff;color:#212529;font-family:Roboto,"Liberation Sans",sans-serif;display:flex;flex-direction:column}
span,a{white-space:nowrap}
svg{display:block;flex:none}
.defs{position:absolute}

/* browser chrome */
.tabstrip{height:43px;flex:none;background:#e8d4ff;display:flex;align-items:center;font-family:"Open Sans","Noto Sans",sans-serif;font-size:15px;padding-left:10px}
.tab{width:299px;height:43px;padding:0 13px 0 15px;display:flex;align-items:center;flex:none;position:relative}
.tab::after{content:"";position:absolute;right:-1px;top:9px;height:25px;border-right:1px solid #8a7f99}
.tab.nosep::after,.tab.active::after{display:none}
.tab.nosep{width:298px}
.tab.active{width:300px;background:#fff;border-radius:10px 10px 0 0}
.fav{width:20px;height:20px;margin-right:10px}
.tab-title{flex:1;overflow:hidden;color:#25222b;letter-spacing:-.5px;white-space:nowrap;padding-bottom:3px}
.t1{letter-spacing:-.47px}
.t3{letter-spacing:-.55px}
.t4,.t5{letter-spacing:-.42px}
.fade{-webkit-mask-image:linear-gradient(90deg,#000 85%,transparent 98%);mask-image:linear-gradient(90deg,#000 85%,transparent 98%);margin-right:9px}
.tx{width:12px;height:12px}
.plus{width:16px;height:16px;margin-left:19px}
.winctl{margin-left:auto;display:flex;gap:41px;padding-right:21px;margin-top:-6px}
.winctl svg{width:16px;height:16px}
.toolbar{height:53px;flex:none;display:flex;align-items:center;border-bottom:1px solid #c9c9cb;font-family:"Open Sans","Noto Sans",sans-serif}
.navbtns{width:135px;display:flex;gap:20px;padding-left:17px}
.navbtns svg{width:20px;height:20px}
.omnibox{width:1610px;height:43px;border-radius:22px;background:#e1e1e1;display:flex;align-items:center;padding:0 13px}
.info{width:18px;height:18px;margin-right:12px}
.url{flex:1;font-size:18px;letter-spacing:-.65px;color:#5f6165}
.url b{font-weight:400;color:#202124}
.oi{width:20px;height:20px;margin-left:19px}
.ext{display:flex;align-items:center;margin-left:17px;gap:20px}
.ext svg{width:20px;height:20px}
.avatar{width:28px;height:28px;border-radius:50%;background:#7b1fa2;color:#fff;text-align:center;line-height:28px;font-size:15px;margin:0 -2px 0 -3px}

/* app header */
.apphead{height:100px;flex:none;border-bottom:1px solid #e0e0e0;display:grid;grid-template-columns:86px 564px 743px 1fr;align-items:center}
.logos{width:46px;height:92px;margin:-4px 0 0 21px}
.org{font-size:22px;line-height:34px;font-weight:600}
.org1{letter-spacing:-.1px}
.org2{letter-spacing:-.45px}
.title{font-size:30px;font-weight:600;margin:0;letter-spacing:.02px;white-space:nowrap}
.nav{display:flex;font-size:22px;font-weight:600;color:#1b1d20}
.nav a{display:flex;align-items:center;letter-spacing:-.15px}
.nav svg{width:23px;height:23px;margin-right:9px}
.n1{width:127px}.n2{width:254px}

/* workspace */
.workspace{height:747px;flex:none;display:flex;position:relative}
.side{width:438px;background:#b9b9b9;border-right:1px solid #a9a9a9;display:flex;flex-direction:column}
.tools{height:79px;flex:none;display:flex;padding:13px 0 0 1px}
.tool{width:54px;height:54px;border-radius:12px;background:#a7b0ba;display:flex;align-items:center;justify-content:center}
.tool svg{width:22px;height:22px;margin-top:-2px}
.tool.on{width:224px;border:2px solid #065abd;font-size:19.500px;font-weight:300;color:#101214;gap:13px;letter-spacing:-.15px}
.tool.a{margin-left:13px}.tool.b{margin-left:12px}.tool.c{margin-left:13px}
.hscroll{height:7px;flex:none;background:#adb2b6;border-bottom:1px solid #a8a8a8;padding-left:6px}
.hthumb{width:244px;height:6px;border-radius:3px;background:#065abd}
.sidebody{flex:1;display:flex}
.form{width:430px;padding:0 0 0 13px}
.cut{margin-left:189px;width:215px;height:5px;background:#a7afb9;border-radius:0 0 7px 7px}
.field{display:flex;height:39px;margin-top:25.200px;align-items:center}
.field label{width:189px;font-size:19.500px;font-weight:600;letter-spacing:-.27px}
.inp{width:215px;height:39px;line-height:41px;border-radius:7px;background:#a7afb9;padding-left:9px;font-size:19.500px;font-weight:300;color:#000;letter-spacing:.33px}
.sats{display:grid;grid-template-columns:126px 125px;grid-template-rows:146px 147px;gap:25px 24px;margin:38px 0 0 64px}
.sat{border:2px solid #a0a0a0;border-radius:12px;display:flex;flex-direction:column;align-items:center;padding-top:18px;font-size:19.500px;font-weight:300;color:#3c3e41}
.sat svg{width:50px;height:50px;overflow:visible}
.sat span{margin-top:29px}
.sat.on{border-color:#065abd;color:#0b57bb}
.sat.narrow{margin:0 1px}
.sat.five{margin-left:1px}
.actions{display:flex;gap:9px;margin-top:31px}
.btn{height:45px;border-radius:7px;display:flex;align-items:center;justify-content:center;font-size:19.500px;font-weight:600}
.btn svg{width:20px;height:20px;margin-right:6px}
.green{width:201px;background:#9bb0a3;color:#1d9350}
.blue{width:193px;background:#94a3b9;color:#065abd;fill:#065abd}
.vscroll{width:7px;background:#abb1b6;display:flex;align-items:flex-end}
.vthumb{width:7px;height:289px;background:#065abd;border-radius:0 0 4px 4px}

/* map */
.mapwrap{width:1482px;position:relative}
.map{width:1482px;height:747px}
.map text{font-family:Roboto,sans-serif;paint-order:stroke}
.lb text,.ln text,.ar text{text-anchor:middle;fill:#202326;stroke:#bcbab6;stroke-width:6px}
.map .lb text{font-weight:600}
.map .ar text{font-family:"DejaVu Sans",sans-serif;stroke-width:4px}
.map>.ln text,.map>.ar text{stroke-width:1px}
.shield rect{fill:#bdbcb9;stroke:#5c5f62;stroke-width:4px}
.shield text{text-anchor:middle;font-size:33px;fill:#333}
.sea{fill:#1e4a96}
.goog text{font-size:24px;stroke:none}
.attr text{font-size:12.500px;fill:#1b1b1b}
.wm{font-size:24px;font-family:"Open Sans",sans-serif;fill:rgba(150,150,150,.7)}
.wm2{font-size:17px;font-family:"Open Sans",sans-serif;fill:#777}
.searchbtn{position:absolute;left:18px;top:19px;width:56px;height:56px;border-radius:12px;background:#065abd;padding:15px}
.searchbtn svg{width:20px;height:20px}
.mapbtns{position:absolute;right:22px;top:277px;display:flex;flex-direction:column;gap:25px}
.mb{width:45px;height:48px;border-radius:11px;background:#065abd;display:flex;align-items:center;justify-content:center}
.mb svg{width:22px;height:22px;margin-left:-1px}
.zoom{position:absolute;right:20px;top:665px;width:137px;height:57px;border-radius:13px;background:#065abd;display:flex;align-items:center;justify-content:space-between;padding:0 33px 0 32px}
.zoom i{width:2px;height:44px;background:#35567f}
.zoom svg{width:16px;height:16px}

/* modal */
.overlay{position:absolute;inset:0;display:flex;justify-content:center;align-items:flex-start;padding-top:7px}
.modal{width:960px;height:732px;background:#fff;border-radius:9px}
.modalhead{height:74px;padding:7px 12px 0 0;display:flex;justify-content:flex-end}
.close{width:49px;height:67px;border-radius:12px;background:#f9c9c9;display:flex;align-items:center;justify-content:center;font-size:18px;font-weight:300}
.cards{display:flex;flex-wrap:wrap;justify-content:center;gap:25px 24px;padding:0 100px}
.card{width:228px;height:211px;border-radius:7px;background:#eee;padding-top:17px}
.card h2{font-size:28.500px;font-weight:350;text-align:center;margin:0 0 11px;line-height:44px;letter-spacing:-.2px}
.card p{margin:0;height:42.500px;line-height:42px;display:flex;justify-content:center;gap:38px;font-size:19.500px;font-weight:300;color:#212529;letter-spacing:-.12px}
.card a{color:#0d6efd}

/* footer */
.foot{height:87px;flex:none;background:#1a1a1a;color:#fff;display:flex;align-items:center;padding-left:598px;font-size:25px;font-weight:300;position:relative}
.foot i{width:1px;height:37px;background:#4a4a4a;margin:0 12px 0 13px}
.foot a{color:#0d6efd}
.foot span,.foot a{padding-top:2px}
.copy{width:386px;letter-spacing:-.41px}.f1{width:74px;letter-spacing:-.9px}.f2{letter-spacing:-.52px}
.ghf{width:26px;height:26px;margin-right:9px}
.watermark{position:absolute;left:1544px;top:-20px;width:310px;height:60px}

/* taskbar */
.taskbar{height:50px;flex:none;background:linear-gradient(90deg,#24373f,#22333a 25%,#2a373b 50%,#252e33 63%,#2a2d2e 72%,#20282e 82%,#1b292f);display:flex;align-items:center;color:#fff;font-family:"Open Sans","Noto Sans",sans-serif}
.start{width:60px;padding-left:20px}
.start svg{width:20px;height:20px}
.search{width:360px;height:50px;background:#f1f1f1;border:1px solid #b5b5b5;display:flex;align-items:center;color:#333;padding-left:14px;font-size:18.500px;letter-spacing:-.33px}
.search span{padding-bottom:2px}
.mag{width:22px;height:22px;margin-right:13px}
.otter{width:97px;height:49px;margin-left:auto}
.apps{display:flex}
.app{width:62px;height:50px;display:flex;align-items:center;justify-content:center;position:relative}
.app.tv{width:63px;padding-right:4px}
.app svg{width:30px;height:30px}
.app.tv svg{width:20px;height:20px}
.app.run::after,.app.cur::after{content:"";position:absolute;left:6px;right:5px;bottom:0;height:3px;background:#fdd3ad}
.app.cur{background:#4f5a5e}
.app.cur::after{left:0;right:0}
.tray{display:flex;align-items:center;margin-left:auto;height:50px}
.sun{width:26px;height:26px;border-radius:50%;background:linear-gradient(160deg,#f5b52e,#f2650c);margin-right:12px}
.wx{width:94px;font-size:18px;letter-spacing:-.5px}
.chev{width:16px;height:16px;margin:0 13px 0 31px}
.ti{width:20px;height:20px;margin-right:10px}
.lang{width:49px;font-size:16px;letter-spacing:-.8px;margin-left:2px}
.clock{width:67px;display:flex;flex-direction:column;align-items:center;font-size:15.500px;letter-spacing:-.6px;line-height:23px}
.note{width:32px;height:34px;margin:8px 0 0 20px}
.edge{width:1px;height:50px;background:#78848a;margin:0 5px 0 13px}
```
